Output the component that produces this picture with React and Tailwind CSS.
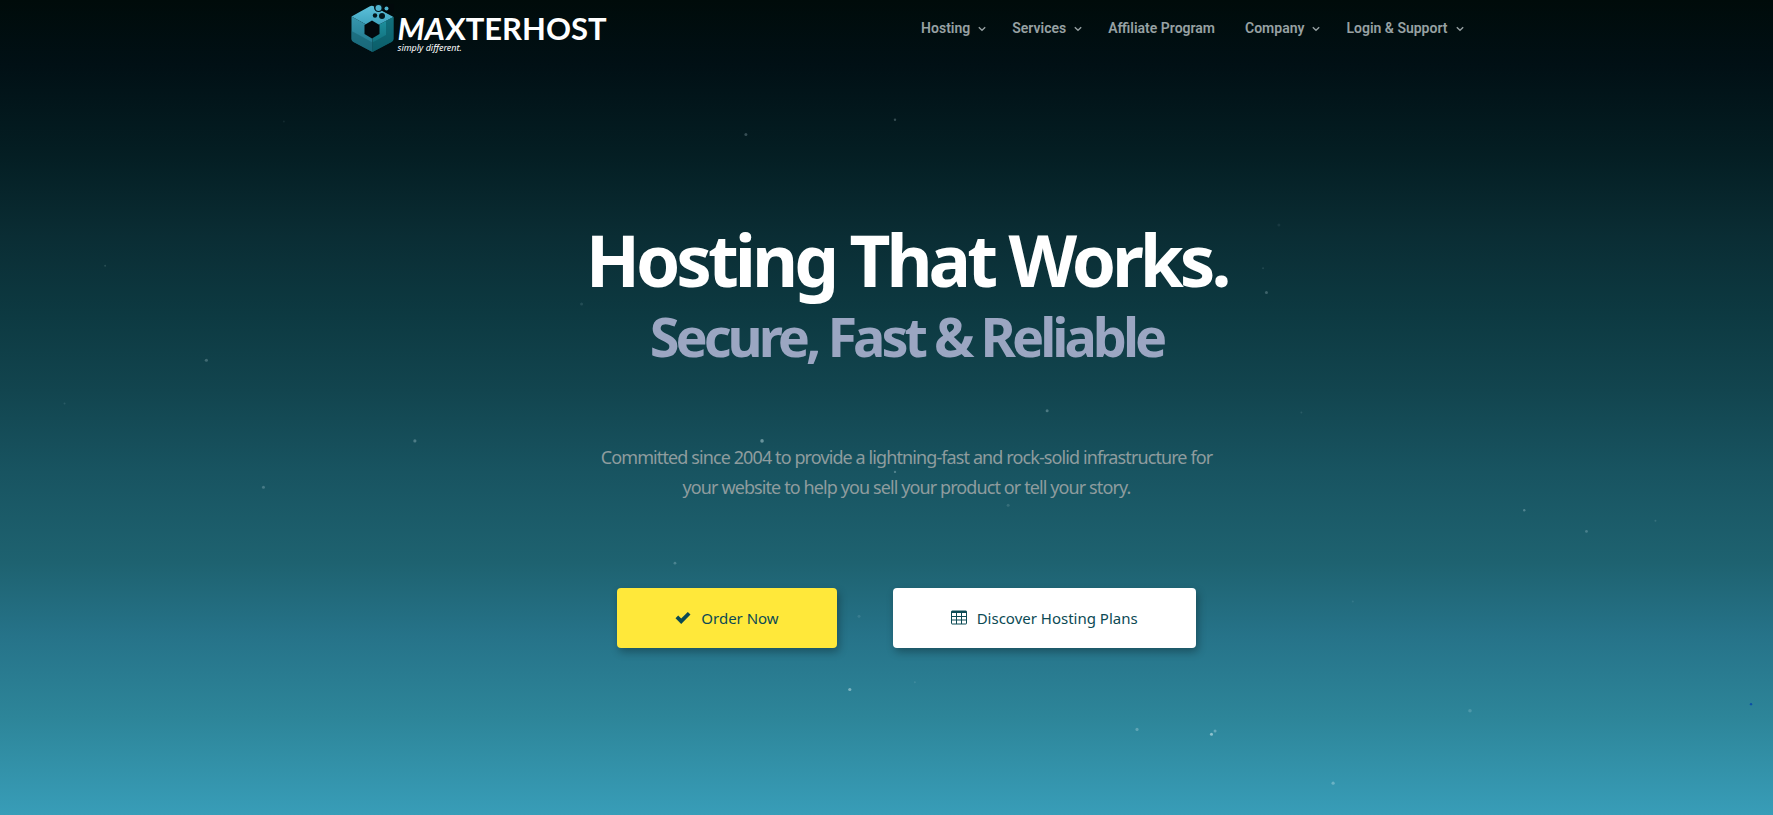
const menu = [
  { label: 'Hosting', hasChildren: true },
  { label: 'Services', hasChildren: true },
  { label: 'Affiliate Program', hasChildren: false },
  { label: 'Company', hasChildren: true },
  { label: 'Login & Support', hasChildren: true },
]

// x and y are percentages of the hero, r is the radius in pixels
const particles = [
  { x: 42.07, y: 16.5, r: 1.5, o: 0.25 },
  { x: 50.48, y: 14.7, r: 1.2, o: 0.25 },
  { x: 16.01, y: 14.9, r: 1, o: 0.08 },
  { x: 72.13, y: 27.6, r: 1.5, o: 0.08 },
  { x: 5.93, y: 32.6, r: 1, o: 0.15 },
  { x: 32.8, y: 37.3, r: 1.5, o: 0.12 },
  { x: 71.24, y: 32.9, r: 1, o: 0.12 },
  { x: 71.43, y: 35.9, r: 1.5, o: 0.25 },
  { x: 11.64, y: 44.2, r: 1.6, o: 0.25 },
  { x: 3.64, y: 49.5, r: 1, o: 0.12 },
  { x: 59.06, y: 50.4, r: 1.5, o: 0.3 },
  { x: 73.4, y: 50.6, r: 1, o: 0.12 },
  { x: 23.4, y: 54.1, r: 1.6, o: 0.3 },
  { x: 42.98, y: 54.1, r: 1.8, o: 0.45 },
  { x: 50.48, y: 57.9, r: 1.2, o: 0.3 },
  { x: 14.86, y: 59.8, r: 1.5, o: 0.25 },
  { x: 56.86, y: 62, r: 1.5, o: 0.15 },
  { x: 85.97, y: 62.6, r: 1.2, o: 0.3 },
  { x: 89.48, y: 65.2, r: 1.4, o: 0.25 },
  { x: 93.37, y: 63.9, r: 1, o: 0.15 },
  { x: 38.07, y: 69.1, r: 1.4, o: 0.25 },
  { x: 48.45, y: 75.6, r: 1.5, o: 0.12 },
  { x: 76.3, y: 73.8, r: 1, o: 0.1 },
  { x: 47.93, y: 84.6, r: 1.6, o: 0.5 },
  { x: 51.6, y: 83.7, r: 1, o: 0.12 },
  { x: 82.91, y: 87.2, r: 1.8, o: 0.2 },
  { x: 64.13, y: 89.5, r: 1.6, o: 0.3 },
  { x: 68.33, y: 90.1, r: 1.5, o: 0.6 },
  { x: 68.53, y: 89.7, r: 1.5, o: 0.35 },
  { x: 75.19, y: 96.1, r: 1.6, o: 0.35 },
]

function Particles() {
  return (
    <svg className="absolute inset-0 h-full w-full" aria-hidden="true">
      {particles.map((p, i) => (
        <circle key={i} cx={`${p.x}%`} cy={`${p.y}%`} r={p.r} fill="#cfe9ee" opacity={p.o} />
      ))}
      <circle cx="98.76%" cy="86.4%" r="1.2" fill="#0b4fa8" />
    </svg>
  )
}

function Cube() {
  return (
    <svg className="h-12 w-11 shrink-0" viewBox="0 0 44 48" aria-hidden="true">
      <defs>
        <linearGradient id="top" x1="0" y1="0" x2="0" y2="1">
          <stop offset="0" stopColor="#5cc0da" />
          <stop offset="1" stopColor="#3a9fba" />
        </linearGradient>
        <linearGradient id="left" x1="0" y1="0" x2="0" y2="1">
          <stop offset="0" stopColor="#3796ae" />
          <stop offset="1" stopColor="#1d7488" />
        </linearGradient>
        <linearGradient id="right" x1="0" y1="0" x2="0" y2="1">
          <stop offset="0" stopColor="#1f94a2" />
          <stop offset="1" stopColor="#0d6571" />
        </linearGradient>
      </defs>
      <path d="M1.500 12.500 19.500 2.500Q22 1.200 24 2.500L43.500 13 22.500 24Z" fill="url(#top)" />
      <path d="M1.500 12.500 22.500 24V48L3.500 38Q1.500 37 1.500 35Z" fill="url(#left)" />
      <path d="M43.500 13V35Q43.500 37 41.500 38L22.500 48V24Z" fill="url(#right)" />
      <path d="M1.500 27 9 31 22.500 38.500V48L3.500 38Q1.500 37 1.500 35Z" fill="#15606f" opacity="0.6" />
      <path d="M36 17V31L22.500 38.500V48L41.500 38Q43.500 37 43.500 35V13Z" fill="#0a5864" opacity="0.6" />
      <path d="M22 16.500 29.500 21V30L22 34.500 14.500 30V21Z" fill="#02090d" />
      <circle cx="32" cy="12" r="3" fill="#02161b" />
      <circle cx="25" cy="11.500" r="2.200" fill="#02161b" />
      <circle cx="28.500" cy="3.500" r="4.500" fill="#02161b" />
      <circle cx="28.500" cy="4" r="3" fill="#4fb4cf" />
      <path d="M33 0H44V8.500L38 9.500 33 7Z" fill="#01090b" />
      <circle cx="36.500" cy="4.500" r="2" fill="#4fb4cf" />
    </svg>
  )
}

function Logo() {
  return (
    <a href="#" className="flex items-center text-white">
      <Cube />
      <span className="flex flex-col pt-2 pl-1">
        <span className="font-['Lato'] text-[31px] leading-8 font-bold">
          <span className="italic">MA</span>XTERHOST
        </span>
        <span className="font-['Noto_Sans'] text-[9px] leading-2 italic">simply different.</span>
      </span>
    </a>
  )
}

function Chevron() {
  return (
    <svg className="mt-0.5 h-2 w-2" viewBox="0 0 8 8" fill="none" stroke="currentColor" strokeWidth="1.4" aria-hidden="true">
      <path d="M0.800 2.200 4 5.200 7.200 2.200" />
    </svg>
  )
}

function CheckIcon() {
  return (
    <svg className="h-4 w-4" viewBox="0 0 16 16" fill="currentColor" aria-hidden="true">
      <path d="M0.500 8.200 3.200 5.500 6.200 8.500 12.800 1.900 15.500 4.600 6.200 13.900Z" />
    </svg>
  )
}

function TableIcon() {
  return (
    <svg className="h-4 w-4" viewBox="0 0 16 16" fill="none" stroke="currentColor" aria-hidden="true">
      <rect x="0.500" y="1" width="15" height="13" rx="0.500" />
      <path d="M0.500 2H15.500" strokeWidth="2" />
      <path d="M0.500 6.500H15.500M0.500 10H15.500M5.500 3V14M10.500 3V14" />
    </svg>
  )
}

export default function App() {
  return (
    <div className="relative min-h-screen overflow-hidden bg-[linear-gradient(to_bottom,#000b0a_0%,#011015_8%,#041e23_19%,#0a2d34_29%,#0d3a42_39%,#12454f_48%,#185461_58%,#1e6270_69%,#267389_78%,#2d8599_88%,#389db8_100%)] pl-10">
      <Particles />
      <header className="relative mx-auto flex h-14 max-w-[1114px] items-center justify-between">
        <Logo />
        <nav className="flex items-center gap-[26px] font-['Roboto'] text-sm font-semibold text-[#97a1a3]">
          {menu.map((item) => (
            <a key={item.label} href="#" className={item.hasChildren ? 'flex items-center gap-2' : 'pr-1'}>
              {item.label}
              {item.hasChildren && <Chevron />}
            </a>
          ))}
        </nav>
      </header>

      <main className="relative mx-auto flex max-w-[1114px] flex-col items-center pt-[158px] text-center font-['Noto_Sans']">
        <h1 className="font-bold tracking-[-4px]">
          <span className="block text-[71px] leading-[92px] text-white">Hosting That Works.</span>
          <span className="block text-[54px] leading-[60px] text-[#9ba6c2]">Secure, Fast &amp; Reliable</span>
        </h1>
        <p className="mt-19 max-w-[640px] text-lg leading-[30px] tracking-tighter text-[#8e9c9e]">
          Committed since 2004 to provide a lightning-fast and rock-solid infrastructure for your
          website to help you sell your product or tell your story.
        </p>
        <div className="mt-[86px] flex gap-14 text-[15px] text-[#0b4a54]">
          <button className="flex h-[60px] items-center gap-2.5 rounded bg-[#ffe83a] px-[58px] shadow-[2px_4px_8px_rgba(0,0,0,0.3)]">
            <CheckIcon />
            Order Now
          </button>
          <button className="flex h-[60px] items-center gap-2.5 rounded bg-white px-[58px] shadow-[2px_4px_8px_rgba(0,0,0,0.3)]">
            <TableIcon />
            Discover Hosting Plans
          </button>
        </div>
      </main>
    </div>
  )
}
